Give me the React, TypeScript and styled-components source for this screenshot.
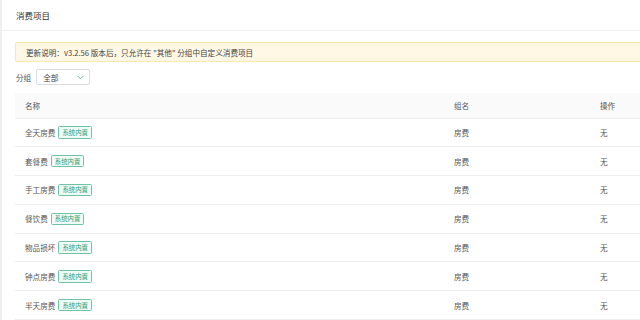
import React from "react";
import styled, { createGlobalStyle } from "styled-components";

const Global = createGlobalStyle`
  html, body { margin: 0; padding: 0; background: #fff; }
  body { font-family: "Noto Sans CJK SC", "Noto Sans", sans-serif; }
`;

const Page = styled.div`
  width: 640px;
  height: 320px;
  overflow: hidden;
  box-sizing: border-box;
  border-left: 2px solid #eef0f3;
  background: #fff;
`;

const Header = styled.div`
  height: 30px;
  display: flex;
  align-items: center;
  padding-left: 14px;
  border-bottom: 1px solid #f1f1f1;
  font-size: 8.5px;
  color: #333;
`;

const Content = styled.div`
  padding: 11px 0 0 13px;
  display: flex;
  flex-direction: column;
`;

const Alert = styled.div`
  height: 20px;
  box-sizing: border-box;
  margin-right: -4px;
  display: flex;
  align-items: center;
  padding-left: 10px;
  background: #fef8e5;
  border: 1px solid #fbe7a6;
  border-radius: 2px;
  font-size: 7.6px;
  color: #444;
  white-space: pre;
`;

const FilterRow = styled.div`
  margin-top: 7px;
  display: flex;
  align-items: center;
  gap: 5px;
  padding-left: 1px;
  font-size: 7.6px;
  color: #555;
`;

const Select = styled.div`
  width: 54px;
  height: 16px;
  box-sizing: border-box;
  border: 1px solid #dcdcdc;
  border-radius: 2px;
  display: flex;
  align-items: center;
  justify-content: space-between;
  padding: 0 5px 0 6px;
  color: #444;
`;

const Table = styled.div`
  margin-top: 8px;
  margin-right: -4px;
  display: flex;
  flex-direction: column;
`;

const Cols = styled.div<{ $head?: boolean }>`
  display: grid;
  grid-template-columns: 429px 146px 1fr;
  align-items: center;
  box-sizing: border-box;
  height: ${(p) => (p.$head ? "25.5px" : "28.8px")};
  background: ${(p) => (p.$head ? "#fafafa" : "#fff")};
  border-bottom: 1px solid #eeeeee;
  font-size: 7.6px;
  color: #555;
`;

const Cell = styled.div`
  padding-left: 10px;
  display: flex;
  align-items: center;
  gap: 3px;
`;

const Tag = styled.span`
  display: inline-flex;
  align-items: center;
  height: 12.5px;
  box-sizing: border-box;
  padding: 0 3px;
  border: 1px solid #6cc4a2;
  border-radius: 1.5px;
  background: #f0faf6;
  color: #2f9e77;
  font-size: 6.4px;
`;

const Chevron = () => (
  <svg width="7" height="5" viewBox="0 0 7 5">
    <path d="M0.8 1 L3.5 3.8 L6.2 1" fill="none" stroke="#4cb58e" strokeWidth="0.9" />
  </svg>
);

const rows = ["全天房费", "套餐费", "手工房费", "餐饮费", "物品损坏", "钟点房费", "半天房费"];

export default function App() {
  return (
    <Page>
      <Global />
      <Header>消费项目</Header>
      <Content>
        <Alert>{'更新说明：v3.2.56 版本后，只允许在 "其他" 分组中自定义消费项目'}</Alert>
        <FilterRow>
          <span>分组</span>
          <Select>
            <span>全部</span>
            <Chevron />
          </Select>
        </FilterRow>
        <Table>
          <Cols $head>
            <Cell>名称</Cell>
            <Cell>组名</Cell>
            <Cell>操作</Cell>
          </Cols>
          {rows.map((r) => (
            <Cols key={r}>
              <Cell>
                {r}
                <Tag>系统内置</Tag>
              </Cell>
              <Cell>房费</Cell>
              <Cell>无</Cell>
            </Cols>
          ))}
        </Table>
      </Content>
    </Page>
  );
}
